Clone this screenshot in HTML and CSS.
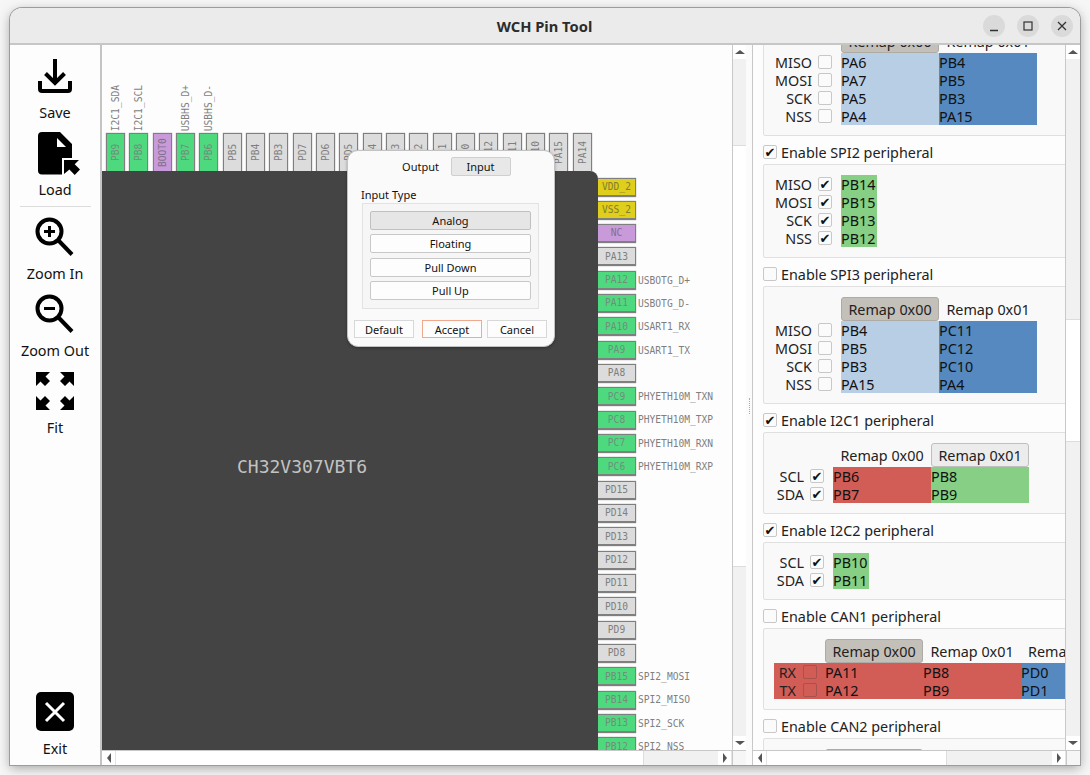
FILE: index.html
```html
<!DOCTYPE html>
<html lang="en">
<head>
<meta charset="utf-8">
<title>WCH Pin Tool</title>
<link rel="stylesheet" href="styles.css">
</head>
<body>
<div class="window">
  <header class="titlebar">
    <div class="title">WCH Pin Tool</div>
    <div class="winbtns">
      <span class="winbtn"><svg width="22" height="22" viewBox="0 0 22 22"><path d="M7 15.500h8" stroke="#333" stroke-width="1.300" fill="none"/></svg></span>
      <span class="winbtn"><svg width="22" height="22" viewBox="0 0 22 22"><rect x="7" y="7" width="8" height="8" stroke="#333" stroke-width="1.200" fill="none"/></svg></span>
      <span class="winbtn"><svg width="22" height="22" viewBox="0 0 22 22"><path d="M7 7l8 8M15 7l-8 8" stroke="#333" stroke-width="1.300" fill="none"/></svg></span>
    </div>
  </header>
  <div class="main">
    <nav class="toolbar">
      <div class="tools">
        <div class="tool">
          <svg class="icon" viewBox="0 0 38 38"><path d="M19 2V26M9.500 16.500L19 26l9.500-9.500M4 24v8a2 2 0 0 0 2 2H32a2 2 0 0 0 2-2V24" fill="none" stroke="#000" stroke-width="4"/></svg>
          <span class="tool-label">Save</span>
        </div>
        <div class="tool">
          <svg class="icon" viewBox="0 0 38 38"><path d="M6-2H24L36 10V24H26V40.500H6a4 4 0 0 1-4-4V2a4 4 0 0 1 4-4z" fill="#000"/><path d="M21 4l9 9h-9z" fill="#fff"/><path d="M28 26h15l-4.300 4.300 5.300 5.300-5.300 5.300-5.300-5.300-5.400 4.400z" fill="#000"/></svg>
          <span class="tool-label">Load</span>
        </div>
      </div>
      <div class="tool-divider"></div>
      <div class="tools">
        <div class="tool">
          <svg class="icon" viewBox="0 0 38 38"><circle cx="13.500" cy="13.500" r="12" fill="none" stroke="#000" stroke-width="4"/><path d="M23 23L36 36.500" stroke="#000" stroke-width="4" fill="none"/><path d="M8 13.500h11M13.500 8v11" stroke="#000" stroke-width="3" fill="none"/></svg>
          <span class="tool-label">Zoom In</span>
        </div>
        <div class="tool">
          <svg class="icon" viewBox="0 0 38 38"><circle cx="13.500" cy="13.500" r="12" fill="none" stroke="#000" stroke-width="4"/><path d="M23 23L36 36.500" stroke="#000" stroke-width="4" fill="none"/><path d="M8 13.500h11" stroke="#000" stroke-width="3" fill="none"/></svg>
          <span class="tool-label">Zoom Out</span>
        </div>
        <div class="tool">
          <svg class="icon" viewBox="0 0 38 38"><path d="M0 0h14l-4.500 4.500 4.500 4.500-5 5-4.500-4.500-4.500 4.500z" fill="#000"/><path transform="matrix(-1 0 0 1 38 0)" d="M0 0h14l-4.500 4.500 4.500 4.500-5 5-4.500-4.500-4.500 4.500z" fill="#000"/><path transform="matrix(1 0 0 -1 0 38)" d="M0 0h14l-4.500 4.500 4.500 4.500-5 5-4.500-4.500-4.500 4.500z" fill="#000"/><path transform="matrix(-1 0 0 -1 38 38)" d="M0 0h14l-4.500 4.500 4.500 4.500-5 5-4.500-4.500-4.500 4.500z" fill="#000"/></svg>
          <span class="tool-label">Fit</span>
        </div>
      </div>
      <div class="tool tool-exit">
        <svg class="icon" viewBox="0 0 38 38"><rect x="0" y="-1" width="38" height="39" rx="5" fill="#000"/><path d="M10 10L28 28M28 10L10 28" stroke="#fff" stroke-width="3" fill="none"/></svg>
        <span class="tool-label">Exit</span>
      </div>
    </nav>

    <section class="pane pane-canvas">
      <div class="pane-body">
        <div class="canvas">
          <div class="top-pins">
            <div class="top-pin"><span class="pin-note">I2C1_SDA</span><span class="pin pin-v green">PB9</span></div>
            <div class="top-pin"><span class="pin-note">I2C1_SCL</span><span class="pin pin-v green">PB8</span></div>
            <div class="top-pin"><span class="pin pin-v purple">BOOT0</span></div>
            <div class="top-pin"><span class="pin-note">USBHS_D+</span><span class="pin pin-v green">PB7</span></div>
            <div class="top-pin"><span class="pin-note">USBHS_D-</span><span class="pin pin-v green">PB6</span></div>
            <div class="top-pin"><span class="pin pin-v">PB5</span></div>
            <div class="top-pin"><span class="pin pin-v">PB4</span></div>
            <div class="top-pin"><span class="pin pin-v">PB3</span></div>
            <div class="top-pin"><span class="pin pin-v">PD7</span></div>
            <div class="top-pin"><span class="pin pin-v">PD6</span></div>
            <div class="top-pin"><span class="pin pin-v">PD5</span></div>
            <div class="top-pin"><span class="pin pin-v">PD4</span></div>
            <div class="top-pin"><span class="pin pin-v">PD3</span></div>
            <div class="top-pin"><span class="pin pin-v">PD2</span></div>
            <div class="top-pin"><span class="pin pin-v">PD1</span></div>
            <div class="top-pin"><span class="pin pin-v">PD0</span></div>
            <div class="top-pin"><span class="pin pin-v">PC12</span></div>
            <div class="top-pin"><span class="pin pin-v">PC11</span></div>
            <div class="top-pin"><span class="pin pin-v">PC10</span></div>
            <div class="top-pin"><span class="pin pin-v">PA15</span></div>
            <div class="top-pin"><span class="pin pin-v">PA14</span></div>
          </div>
          <div class="chip-row">
            <div class="chip"><span class="chip-name">CH32V307VBT6</span></div>
            <div class="right-pins">
              <div class="right-pin"><span class="pin pin-h yellow">VDD_2</span></div>
              <div class="right-pin"><span class="pin pin-h yellow">VSS_2</span></div>
              <div class="right-pin"><span class="pin pin-h purple">NC</span></div>
              <div class="right-pin"><span class="pin pin-h">PA13</span></div>
              <div class="right-pin"><span class="pin pin-h green">PA12</span><span class="pin-note">USBOTG_D+</span></div>
              <div class="right-pin"><span class="pin pin-h green">PA11</span><span class="pin-note">USBOTG_D-</span></div>
              <div class="right-pin"><span class="pin pin-h green">PA10</span><span class="pin-note">USART1_RX</span></div>
              <div class="right-pin"><span class="pin pin-h green">PA9</span><span class="pin-note">USART1_TX</span></div>
              <div class="right-pin"><span class="pin pin-h">PA8</span></div>
              <div class="right-pin"><span class="pin pin-h green">PC9</span><span class="pin-note">PHYETH10M_TXN</span></div>
              <div class="right-pin"><span class="pin pin-h green">PC8</span><span class="pin-note">PHYETH10M_TXP</span></div>
              <div class="right-pin"><span class="pin pin-h green">PC7</span><span class="pin-note">PHYETH10M_RXN</span></div>
              <div class="right-pin"><span class="pin pin-h green">PC6</span><span class="pin-note">PHYETH10M_RXP</span></div>
              <div class="right-pin"><span class="pin pin-h">PD15</span></div>
              <div class="right-pin"><span class="pin pin-h">PD14</span></div>
              <div class="right-pin"><span class="pin pin-h">PD13</span></div>
              <div class="right-pin"><span class="pin pin-h">PD12</span></div>
              <div class="right-pin"><span class="pin pin-h">PD11</span></div>
              <div class="right-pin"><span class="pin pin-h">PD10</span></div>
              <div class="right-pin"><span class="pin pin-h">PD9</span></div>
              <div class="right-pin"><span class="pin pin-h">PD8</span></div>
              <div class="right-pin"><span class="pin pin-h green">PB15</span><span class="pin-note">SPI2_MOSI</span></div>
              <div class="right-pin"><span class="pin pin-h green">PB14</span><span class="pin-note">SPI2_MISO</span></div>
              <div class="right-pin"><span class="pin pin-h green">PB13</span><span class="pin-note">SPI2_SCK</span></div>
              <div class="right-pin"><span class="pin pin-h green">PB12</span><span class="pin-note">SPI2_NSS</span></div>
            </div>
          </div>
          <div class="dialog">
            <div class="dlg-tabs">
              <span class="dlg-tab">Output</span>
              <span class="dlg-tab dlg-tab-on">Input</span>
            </div>
            <div class="dlg-label">Input Type</div>
            <div class="dlg-group">
              <span class="dlg-btn dlg-btn-on">Analog</span>
              <span class="dlg-btn">Floating</span>
              <span class="dlg-btn">Pull Down</span>
              <span class="dlg-btn">Pull Up</span>
            </div>
            <div class="dlg-foot">
              <span class="dlg-act">Default</span>
              <span class="dlg-act dlg-accept">Accept</span>
              <span class="dlg-act dlg-cancel">Cancel</span>
            </div>
          </div>
        </div>
        <div class="vbar">
          <span class="sb-btn"><i class="arrow arrow-up"></i></span>
          <div class="track"><div class="thumb thumb-canvas"></div></div>
          <span class="sb-btn"><i class="arrow arrow-down"></i></span>
        </div>
      </div>
      <div class="hbar">
        <span class="sb-btn"><i class="arrow arrow-left"></i></span>
        <div class="track track-h"><div class="thumb thumb-canvas-h"></div></div>
        <span class="sb-btn"><i class="arrow arrow-right"></i></span>
        <span class="corner"></span>
      </div>
    </section>

    <div class="splitter"><span class="grip"></span></div>

    <section class="pane pane-periph">
      <div class="pane-body">
        <div class="periph-view">
          <div class="periph-scroll">
            <div class="panel">
              <div class="grid grid-spi">
                <span></span><span></span><span class="remap remap-on">Remap 0x00</span><span class="remap">Remap 0x01</span>
                <span class="sig">MISO</span><span class="cb"></span><span class="cell lblue">PA6</span><span class="cell blue">PB4</span>
                <span class="sig">MOSI</span><span class="cb"></span><span class="cell lblue">PA7</span><span class="cell blue">PB5</span>
                <span class="sig">SCK</span><span class="cb"></span><span class="cell lblue">PA5</span><span class="cell blue">PB3</span>
                <span class="sig">NSS</span><span class="cb"></span><span class="cell lblue">PA4</span><span class="cell blue">PA15</span>
              </div>
            </div>

            <label class="heading"><span class="cb cb-on">✔</span>Enable SPI2 peripheral</label>
            <div class="panel">
              <div class="grid grid-spi grid-single">
                <span class="sig">MISO</span><span class="cb cb-on">✔</span><span class="cell green-cell">PB14</span>
                <span class="sig">MOSI</span><span class="cb cb-on">✔</span><span class="cell green-cell">PB15</span>
                <span class="sig">SCK</span><span class="cb cb-on">✔</span><span class="cell green-cell">PB13</span>
                <span class="sig">NSS</span><span class="cb cb-on">✔</span><span class="cell green-cell">PB12</span>
              </div>
            </div>

            <label class="heading"><span class="cb"></span>Enable SPI3 peripheral</label>
            <div class="panel">
              <div class="grid grid-spi">
                <span></span><span></span><span class="remap remap-on">Remap 0x00</span><span class="remap">Remap 0x01</span>
                <span class="sig">MISO</span><span class="cb"></span><span class="cell lblue">PB4</span><span class="cell blue">PC11</span>
                <span class="sig">MOSI</span><span class="cb"></span><span class="cell lblue">PB5</span><span class="cell blue">PC12</span>
                <span class="sig">SCK</span><span class="cb"></span><span class="cell lblue">PB3</span><span class="cell blue">PC10</span>
                <span class="sig">NSS</span><span class="cb"></span><span class="cell lblue">PA15</span><span class="cell blue">PA4</span>
              </div>
            </div>

            <label class="heading"><span class="cb cb-on">✔</span>Enable I2C1 peripheral</label>
            <div class="panel">
              <div class="grid grid-i2c">
                <span></span><span></span><span class="remap">Remap 0x00</span><span class="remap remap-sel">Remap 0x01</span>
                <span class="sig">SCL</span><span class="cb cb-on">✔</span><span class="cell red">PB6</span><span class="cell green-cell">PB8</span>
                <span class="sig">SDA</span><span class="cb cb-on">✔</span><span class="cell red">PB7</span><span class="cell green-cell">PB9</span>
              </div>
            </div>

            <label class="heading"><span class="cb cb-on">✔</span>Enable I2C2 peripheral</label>
            <div class="panel">
              <div class="grid grid-i2c grid-single">
                <span class="sig">SCL</span><span class="cb cb-on">✔</span><span class="cell green-cell">PB10</span>
                <span class="sig">SDA</span><span class="cb cb-on">✔</span><span class="cell green-cell">PB11</span>
              </div>
            </div>

            <label class="heading"><span class="cb"></span>Enable CAN1 peripheral</label>
            <div class="panel">
              <div class="grid grid-can">
                <span></span><span></span><span class="remap remap-on">Remap 0x00</span><span class="remap">Remap 0x01</span><span class="remap remap-last">Remap 0x02</span>
                <span class="sig red">RX</span><span class="cb-wrap red"><span class="cb cb-red"></span></span><span class="cell red">PA11</span><span class="cell red">PB8</span><span class="cell blue">PD0</span>
                <span class="sig red">TX</span><span class="cb-wrap red"><span class="cb cb-red"></span></span><span class="cell red">PA12</span><span class="cell red">PB9</span><span class="cell blue">PD1</span>
              </div>
            </div>

            <label class="heading"><span class="cb"></span>Enable CAN2 peripheral</label>
            <div class="panel">
              <div class="grid grid-can">
                <span></span><span></span><span class="remap remap-on">Remap 0x00</span><span class="remap">Remap 0x01</span>
              </div>
            </div>
          </div>
        </div>
        <div class="vbar vbar-periph">
          <span class="sb-btn"><i class="arrow arrow-up"></i></span>
          <div class="track"><div class="thumb thumb-periph"></div></div>
          <span class="sb-btn"><i class="arrow arrow-down"></i></span>
        </div>
      </div>
      <div class="hbar">
        <span class="sb-btn"><i class="arrow arrow-left"></i></span>
        <div class="track track-h"><div class="thumb thumb-periph-h"></div></div>
        <span class="sb-btn"><i class="arrow arrow-right"></i></span>
        <span class="corner"></span>
      </div>
    </section>
  </div>
</div>
</body>
</html>
```

FILE: styles.css
```css
* { box-sizing: border-box; }
html, body { margin: 0; height: 100%; }
body {
  width: 1090px;
  height: 775px;
  padding: 8px 10px 10px;
  background: #f6f6f6;
  font-family: "Noto Sans", "Open Sans", sans-serif;
  color: #111;
  overflow: hidden;
}
.window {
  width: 1070px;
  height: 757px;
  display: flex;
  flex-direction: column;
  background: #fff;
  border-radius: 12px 12px 0 0;
  box-shadow: 0 0 0 1px #9c9c9c, 0 3px 12px rgba(0,0,0,.35);
  overflow: hidden;
}
.titlebar {
  height: 37px;
  flex: none;
  display: flex;
  align-items: center;
  justify-content: center;
  position: relative;
  background: #ebebeb;
  border-bottom: 2px solid #c6c6c6;
}
.title { font-size: 14.700px; font-weight: 700; color: #2c2c2c; margin-left: -1px; }
.winbtns {
  position: absolute;
  right: 7px;
  top: 7px;
  display: flex;
  gap: 12px;
}
.winbtn {
  width: 22px;
  height: 22px;
  border-radius: 50%;
  background: #dadada;
  display: block;
}
.winbtn svg { display: block; }

.main { flex: 1; display: flex; min-height: 0; }

.toolbar {
  width: 92px;
  flex: none;
  display: flex;
  flex-direction: column;
  align-items: center;
  padding: 12px 0 7px;
  background: #fdfdfd;
  border-right: 2px solid #c4c4c4;
}
.tools { display: flex; flex-direction: column; gap: 12px; width: 100%; }
.tool {
  display: flex;
  flex-direction: column;
  align-items: center;
  width: 100%;
}
.icon { width: 38px; height: 38px; overflow: visible; display: block; margin-bottom: 9px; }
.tool-label { font-size: 14.400px; line-height: 18px; color: #111; }
.tool-divider { width: 71px; height: 1px; background: #dcdcdc; margin: 7px 0 11px; flex: none; }
.tool-exit { margin-top: auto; }

.pane { display: flex; flex-direction: column; min-width: 0; }
.pane-canvas { width: 644px; flex: none; }
.pane-periph { flex: 1; border-left: 1px solid #c8c8c8; }
.pane-body { flex: 1; display: flex; min-height: 0; }

.canvas {
  position: relative;
  width: 630px;
  flex: none;
  background: #fdfdfd;
  overflow: hidden;
}
.top-pins {
  height: 126px;
  display: flex;
  gap: 4.33px;
  padding-left: 4px;
}
.top-pin {
  width: 19px;
  flex: none;
  display: flex;
  flex-direction: column;
  justify-content: flex-end;
  align-items: center;
}
.pin {
  font: 9.6px/1 "DejaVu Sans Mono", monospace;
  color: #7f7f7f;
  background: #dcdcdc;
  border: 1px solid #7f7f7f;
  box-shadow: 0 0 1px #8a8a8a;
  display: flex;
  align-items: center;
  justify-content: center;
  flex: none;
}
.pin-v {
  width: 19px;
  height: 38px;
  writing-mode: vertical-rl;
  transform: rotate(180deg);
  border-top: 0;
}
.pin-h {
  width: 38px;
  height: 19px;
  border-left: 0;
  border-bottom-width: 2px;
}
.green { background: #4fd97f; color: #6f8f7c; }
.purple { background: #c99ada; color: #81708b; }
.yellow { background: #dfce1c; color: #847c2e; }
.pin-note {
  font: 9.6px/1 "DejaVu Sans Mono", monospace;
  color: #7f7f7f;
  white-space: nowrap;
}
.top-pin .pin-note {
  writing-mode: vertical-rl;
  transform: rotate(180deg);
  margin-bottom: 2px;
}
.chip-row { display: flex; position: relative; }
.chip {
  width: 496px;
  height: 600px;
  flex: none;
  background: #444;
  border-top-right-radius: 8px;
  padding: 285px 0 0 135px;
  position: relative;
  z-index: 1;
}
.chip-name {
  font: 18px/1 "DejaVu Sans Mono", monospace;
  color: #c2c2c2;
}
.right-pins {
  display: flex;
  flex-direction: column;
  gap: 4.33px;
  padding-top: 6.5px;
  height: 579px;
}
.right-pin {
  height: 19px;
  flex: none;
  display: flex;
  align-items: center;
  gap: 2px;
}
.dialog {
  position: absolute;
  left: 245px;
  top: 105px;
  width: 208px;
  height: 197px;
  z-index: 2;
  background: #fafafa;
  border: 1px solid #c2c2c2;
  border-radius: 11px;
  box-shadow: 0 1px 3px rgba(0,0,0,.3);
  padding: 6px 7px 0 6px;
  font-size: 11px;
  display: flex;
  flex-direction: column;
}
.dlg-tabs { display: flex; justify-content: center; height: 19px; }
.dlg-tab {
  width: 60px;
  display: flex;
  align-items: center;
  justify-content: center;
}
.dlg-tab-on { background: #e8e8e8; border: 1px solid #cfcfcf; border-radius: 2px; }
.dlg-label { margin: 10px 0 0 7px; height: 17px; line-height: 17px; }
.dlg-group {
  margin-left: 8px;
  width: 177px;
  height: 106px;
  padding: 7px;
  background: #f6f6f6;
  border: 1px solid #e2e2e2;
  display: flex;
  flex-direction: column;
  gap: 4.33px;
}
.dlg-btn {
  height: 19px;
  flex: none;
  display: flex;
  align-items: center;
  justify-content: center;
  background: #fdfdfd;
  border: 1px solid #c8c8c8;
  border-radius: 2px;
}
.dlg-btn-on { background: #e6e6e6; border-color: #c0c0c0; }
.dlg-foot { display: flex; margin-top: 11px; }
.dlg-act {
  width: 60px;
  height: 18px;
  display: flex;
  align-items: center;
  justify-content: center;
  background: #fdfdfd;
  border: 1px solid #d8d8d8;
}
.dlg-accept { border-color: #f0a98c; margin-left: 8px; }
.dlg-cancel { margin-left: 5px; }

.vbar {
  width: 14px;
  flex: none;
  display: flex;
  flex-direction: column;
  border-left: 1px solid #c8c8c8;
  background: #fff;
}
.vbar-periph { width: 15px; }
.hbar {
  height: 15px;
  flex: none;
  display: flex;
  border-top: 1px solid #c8c8c8;
  background: #fff;
}
.sb-btn {
  width: 14px;
  height: 14px;
  flex: none;
  display: flex;
  align-items: center;
  justify-content: center;
  background: #fff;
}
.vbar .sb-btn { width: 100%; }
.hbar .sb-btn { border-right: 1px solid #e4e4e4; }
.corner { width: 14px; flex: none; border-left: 1px solid #c8c8c8; background: #f6f6f6; }
.arrow { display: block; width: 0; height: 0; border-style: solid; border-color: transparent; }
.arrow-up { border-width: 0 5px 4px; border-bottom-color: #555; }
.arrow-down { border-width: 4px 5px 0; border-top-color: #555; }
.arrow-left { border-width: 5px 4px 5px 0; border-right-color: #555; }
.arrow-right { border-width: 5px 0 5px 4px; border-left-color: #555; }
.track { flex: 1; background: #f1f1f1; min-height: 0; display: flex; flex-direction: column; }
.track-h { flex-direction: row; }
.thumb { background: #fff; flex: none; }
.thumb-canvas { margin-top: 86px; height: 422px; border-top: 1px solid #ddd; border-bottom: 1px solid #ddd; }
.thumb-periph { margin-top: 260px; height: 123px; border-top: 1px solid #ddd; border-bottom: 1px solid #ddd; }
.thumb-canvas-h { width: 528px; border-right: 1px solid #ddd; }
.thumb-periph-h { width: 180px; border-right: 1px solid #ddd; }

.splitter {
  width: 6px;
  flex: none;
  background: #fbfbfb;
  display: flex;
  align-items: flex-start;
  justify-content: center;
  padding-top: 353px;
}
.grip { width: 1px; height: 16px; border-left: 1px dotted #aaa; }

.periph-view {
  width: 312px;
  flex: none;
  overflow: hidden;
  background: #fdfdfd;
}
.periph-scroll {
  margin-top: -27px;
  padding-left: 10px;
  width: 340px;
}
.panel {
  width: 330px;
  padding: 10px;
  background: #f9f9f9;
  border: 1px solid #e0e0e0;
  border-radius: 2px;
}
.heading {
  display: flex;
  align-items: center;
  gap: 4px;
  height: 18px;
  margin: 7px 0 3px;
  font-size: 14.350px;
  color: #222;
}
.grid { display: grid; grid-auto-rows: 18px; align-items: center; }
.grid-spi { grid-template-columns: 38px 6px 14px 9px 98px 98px; }
.grid-i2c { grid-template-columns: 30px 6px 14px 9px 98px 98px; }
.grid-can { grid-template-columns: 22px 29px 98px 98px 98px; }
.grid > .sig, .grid > .cell, .grid > .remap { font-size: 14.350px; }
.grid-spi > .cb, .grid-i2c > .cb { grid-column: 3; }
.grid-spi > .sig, .grid-i2c > .sig { grid-column: 1; }
.grid-spi > .cell:nth-child(4n+3), .grid-i2c > .cell:nth-child(4n+3) { grid-column: 5; }
.grid-spi > .remap:nth-child(3), .grid-i2c > .remap:nth-child(3) { grid-column: 5; }
.grid-single > .cell { grid-column: 5; width: 36px; }
.grid > :empty:not(.cb) { height: 0; }
.sig { text-align: right; height: 18px; line-height: 20px; color: #222; }
.cell { height: 18px; line-height: 20px; color: #111; }
.lblue { background: #b8cee5; }
.blue { background: #5589bf; }
.green-cell { background: #86cf84; }
.red { background: #d25c56; }
.remap {
  height: 24px;
  line-height: 24px;
  text-align: center;
  border: 1px solid transparent;
  border-radius: 3px;
  color: #222;
  align-self: end;
}
.remap-on { background: #c3bfb9; border-color: #aeaaa4; }
.remap-sel { background: #ececec; border-color: #bfbfbf; }
.remap-last { text-align: left; padding-left: 6px; white-space: nowrap; }
.grid:has(.remap) { grid-template-rows: 24px; }
.cb {
  width: 14px;
  height: 14px;
  flex: none;
  display: flex;
  align-items: center;
  justify-content: center;
  background: #fbfbfb;
  border: 1px solid #c8c8c8;
  border-radius: 2px;
  font-size: 13px;
  line-height: 1;
  color: #111;
  font-family: "DejaVu Sans", sans-serif;
}
.cb-wrap { height: 18px; display: flex; align-items: center; padding-left: 7px; }
.cb-red { background: transparent; border-color: #a9514c; }
```
